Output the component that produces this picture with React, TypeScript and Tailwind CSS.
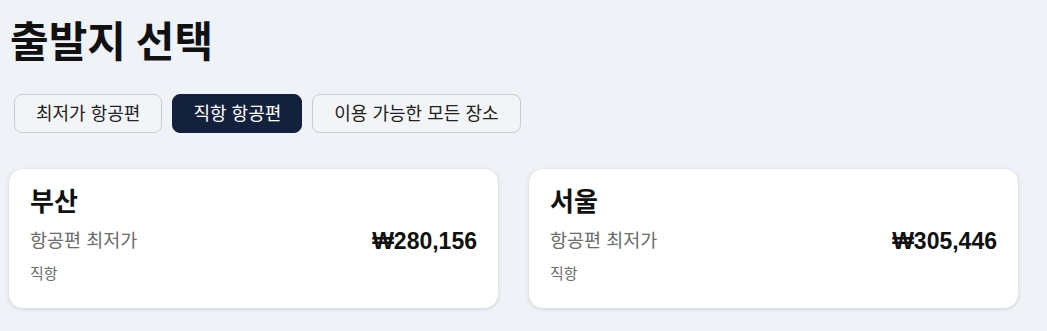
const filters = ['최저가 항공편', '직항 항공편', '이용 가능한 모든 장소'];
const active = '직항 항공편';

const origins = [
  { city: '부산', price: '₩280,156', note: '직항' },
  { city: '서울', price: '₩305,446', note: '직항' },
];

export default function App() {
  return (
    <div
      className="min-h-screen bg-[#eff2f7] px-[9px] pt-[12px] text-[#111]"
      style={{ fontFamily: "Inter, 'Noto Sans CJK KR', sans-serif" }}
    >
      {/* 제목 */}
      <h1 className="ml-px text-[42px] font-bold leading-[60px]">출발지 선택</h1>

      {/* 필터 */}
      <div className="mt-[22px] ml-[5px] flex gap-[10px]">
        {filters.map((f) => (
          <button
            key={f}
            className={
              f === active
                ? 'h-[39px] rounded-lg border border-[#14213d] bg-[#14213d] px-[20px] text-[18px] text-white'
                : 'h-[39px] rounded-lg border border-[#c9ccd2] bg-[#f3f4f7] px-[21px] text-[18px] text-[#222]'
            }
          >
            {f}
          </button>
        ))}
      </div>

      {/* 카드 */}
      <div className="mt-[36px] flex gap-[31px]">
        {origins.map((o) => (
          <div
            key={o.city}
            className="w-[489px] h-[139px] rounded-[14px] bg-white px-[21px] pt-[15px] shadow-[0_1px_4px_rgba(0,0,0,0.15)]"
          >
            <div className="text-[26px] font-bold leading-[36px]">{o.city}</div>
            <div className="mt-[4px] flex items-center justify-between">
              <span className="text-[18.5px] text-[#6b6b6b]">항공편 최저가</span>
              <span className="font-['Liberation_Sans',sans-serif] text-[23px] font-bold">{o.price}</span>
            </div>
            <div className="mt-[4px] text-[15px] text-[#6b6b6b]">{o.note}</div>
          </div>
        ))}
      </div>
    </div>
  );
}
